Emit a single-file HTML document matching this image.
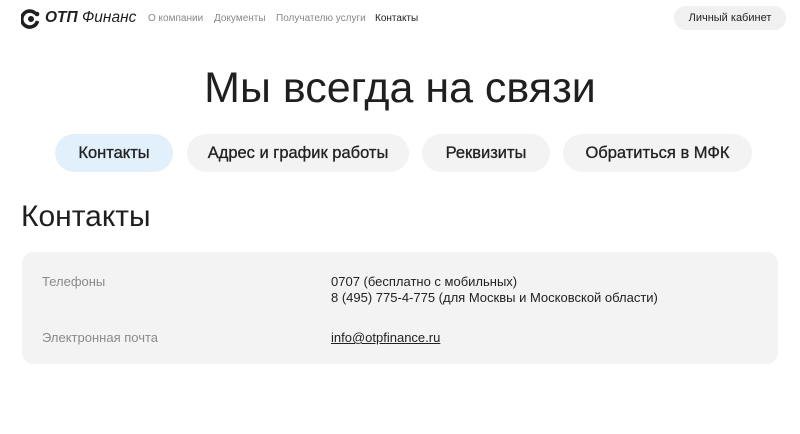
<!DOCTYPE html>
<html><head><meta charset="utf-8"><style>
*{margin:0;padding:0;box-sizing:border-box}
body{width:800px;height:434px;background:#fff;font-family:"Liberation Sans",sans-serif;color:#1f1f1f;position:relative;overflow:hidden}
.a{position:absolute;white-space:nowrap}
.nav{font-size:10px;color:#888;top:13px}
.tab{position:absolute;top:134px;height:38px;border-radius:19px;background:#f3f3f3;font-size:16.5px;line-height:38px;text-align:center;color:#222;-webkit-text-stroke:0.3px #222}
.lbl{font-size:13px;color:#8a8a8a}
.val{font-size:13px;color:#222}
</style></head><body>
<svg class="a" style="left:21px;top:9px" width="20" height="20" viewBox="0 0 20 20">
<path d="M14.5 4.5 A8 8 0 1 0 16.5 12" fill="none" stroke="#1f1f1f" stroke-width="3.6"/>
<circle cx="10" cy="10" r="3" fill="#1f1f1f"/>
<circle cx="16" cy="5" r="2.3" fill="#1f1f1f"/>
</svg>
<div class="a" style="left:45px;top:9px;font-size:15.5px;font-weight:bold;font-style:italic;color:#1f1f1f">ОТП <span style="font-weight:normal">Финанс</span></div>
<div class="a nav" style="left:148px">О компании</div>
<div class="a nav" style="left:214px">Документы</div>
<div class="a nav" style="left:276px">Получателю услуги</div>
<div class="a nav" style="left:375px;color:#1f1f1f">Контакты</div>
<div class="a" style="left:674px;top:6px;width:112px;height:24px;border-radius:12px;background:#f0f0f0;font-size:11px;line-height:24px;text-align:center">Личный кабинет</div>
<div class="a" style="left:0;width:800px;top:64px;text-align:center;font-size:43px;color:#1f1f1f">Мы всегда на связи</div>
<div class="tab" style="left:55px;width:118px;background:#e2f0fc">Контакты</div>
<div class="tab" style="left:187px;width:222px">Адрес и график работы</div>
<div class="tab" style="left:422px;width:128px">Реквизиты</div>
<div class="tab" style="left:563px;width:189px">Обратиться в МФК</div>
<div class="a" style="left:21px;top:200px;font-size:30px">Контакты</div>
<div class="a" style="left:22px;top:252px;width:756px;height:112px;border-radius:12px;background:#f3f3f3"></div>
<div class="a lbl" style="left:42px;top:274px">Телефоны</div>
<div class="a val" style="left:331px;top:274px;line-height:16px">0707 (бесплатно с мобильных)<br>8 (495) 775-4-775 (для Москвы и Московской области)</div>
<div class="a lbl" style="left:42px;top:330px">Электронная почта</div>
<div class="a val" style="left:331px;top:330px;text-decoration:underline">info@otpfinance.ru</div>
</body></html>
